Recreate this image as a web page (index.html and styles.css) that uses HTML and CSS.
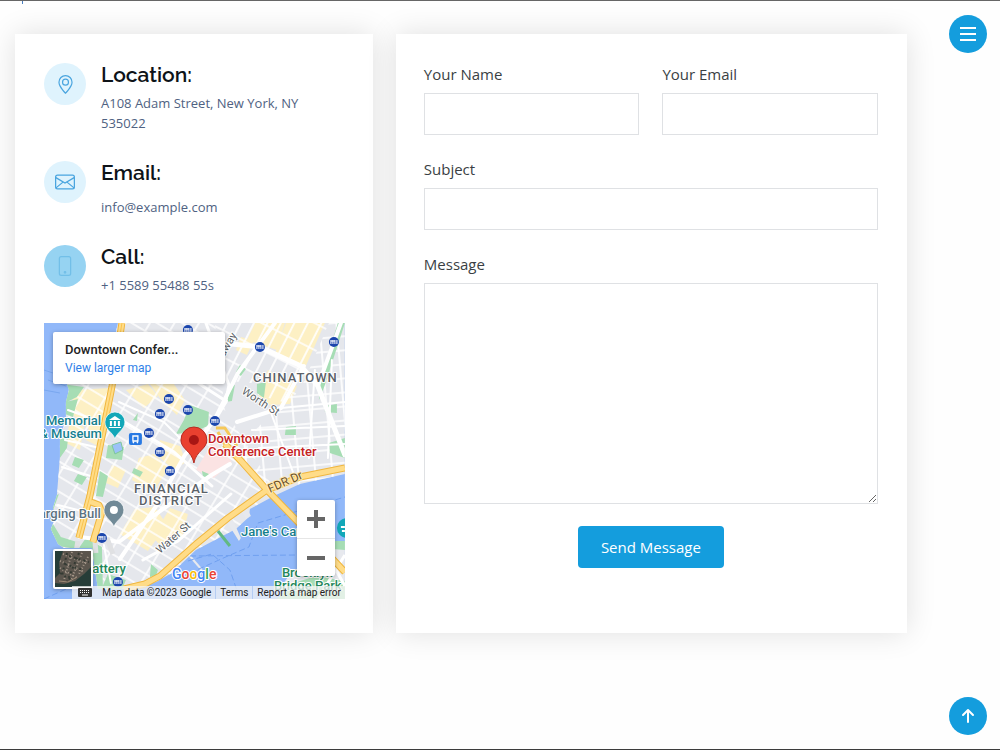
FILE: index.html
```
<!DOCTYPE html>
<html lang="en">
<head>
<meta charset="utf-8">
<meta name="viewport" content="width=device-width, initial-scale=1">
<title>Contact</title>
<link rel="stylesheet" href="styles.css">
</head>
<body>
<main class="page">
  <section class="contact">
    <div class="card info">
      <div class="info-item">
        <span class="info-icon"><svg viewBox="0 0 16 16" width="19" height="19" fill="currentColor"><path d="M12.166 8.94c-.524 1.062-1.234 2.12-1.96 3.07A31.493 31.493 0 0 1 8 14.58a31.481 31.481 0 0 1-2.206-2.57c-.726-.95-1.436-2.008-1.96-3.07C3.304 7.867 3 6.862 3 6a5 5 0 0 1 10 0c0 .862-.305 1.867-.834 2.94zM8 16s6-5.686 6-10A6 6 0 0 0 2 6c0 4.314 6 10 6 10z"/><path d="M8 8a2 2 0 1 1 0-4 2 2 0 0 1 0 4zm0 1a3 3 0 1 0 0-6 3 3 0 0 0 0 6z"/></svg></span>
        <div class="info-body">
          <h2 class="info-title">Location:</h2>
          <p class="info-text">A108 Adam Street, New York, NY 535022</p>
        </div>
      </div>
      <div class="info-item">
        <span class="info-icon"><svg viewBox="0 0 16 16" width="20" height="20" fill="none" stroke="currentColor"><rect x=".5" y="2.500" width="15" height="11" rx="1.500"/><path d="M.7 4.500 8 8.900l7.300-4.400M.8 12.700l5.600-4.600M15.200 12.700 9.600 8.100"/></svg></span>
        <div class="info-body info-body-spaced">
          <h2 class="info-title">Email:</h2>
          <p class="info-text">info@example.com</p>
        </div>
      </div>
      <div class="info-item">
        <span class="info-icon info-icon-active"><svg viewBox="0 0 16 16" width="20" height="20" fill="none" stroke="currentColor"><rect x="3.500" y=".5" width="9" height="15" rx="1.500"/><circle cx="8" cy="13" r=".6" fill="currentColor"/></svg></span>
        <div class="info-body">
          <h2 class="info-title">Call:</h2>
          <p class="info-text">+1 5589 55488 55s</p>
        </div>
      </div>

      <div class="map">
        <svg class="map-art" viewBox="44 323 301 276" preserveAspectRatio="xMidYMid slice" role="img" aria-label="Map of Lower Manhattan">
          <defs>
            <pattern id="grid" width="21" height="13" patternUnits="userSpaceOnUse" patternTransform="rotate(31)"><path d="M0 1H21M1 0V13" stroke="#fff" stroke-width="1.500" fill="none"/></pattern>
            <pattern id="gridEast" width="17" height="14" patternUnits="userSpaceOnUse" patternTransform="rotate(-5)"><path d="M0 1H17M1 0V14" stroke="#fff" stroke-width="1.700" fill="none"/></pattern>
            <pattern id="gridNorth" width="12" height="24" patternUnits="userSpaceOnUse" patternTransform="rotate(27)"><path d="M0 1H12M1 0V24" stroke="#fff" stroke-width="1.700" fill="none"/></pattern>
            <g id="metro"><circle r="5" fill="#1b46ad"/><path d="M-3 2V-2M-1 2V-2M1 2V-2M3 2V-2M-3-1H1" fill="none" stroke="#fff" stroke-width="1"/></g>
            <clipPath id="land"><path d="M118 323H345V474L300 484 274 496 250 509 249 517 236 529 196 550 172 573 156 582 134 589 98 589 92 548 77 548 64 548 58 544 51 529 56 516 53 508 57 495 60 457 60 440 66 418 66 402 69 390 67 384 77 375 112 350Z"/></clipPath>
          </defs>
          <path fill="#91b8f9" d="M44 323H345V599H44Z"/>
          <g clip-path="url(#land)">
            <path fill="#e5e7ec" d="M44 323H345V599H44Z"/>
            <g fill="#fdf0c4">
              <path d="M75 390 110 388 105 415 90 430 70 412ZM92 415 106 418 102 448 86 440ZM70 420 84 427 80 450 66 443Z"/>
              <path d="M150 384 174 384 185 400 177 415 162 401ZM126 390 148 384 158 396 144 408Z"/>
              <path d="M255 323 285 323 277 350 247 340ZM286 323 325 323 305 368 275 354ZM268 370 297 386 290 404 270 405 258 395ZM241 337 254 341 247 355 236 350Z"/>
              <path d="M139 458 154 454 169 468 153 492 132 480ZM160 440 180 446 186 462 174 470 158 456ZM135 509 155 507 167 525 148 551 120 534ZM170 508 188 514 182 538 164 550 153 537ZM112 465 126 470 118 488 106 483Z"/>
            </g>
            <path fill="url(#grid)" d="M44 323H215L225 410 272 485 190 599H44Z"/>
            <path fill="url(#gridNorth)" d="M215 323H329L303 382 290 404 258 395 262 384 218 380Z"/>
            <path fill="url(#gridEast)" d="M329 323H345V480L268 490 236 450 275 410 304 382Z"/>
            <path d="M196 470 214 440 232 462 214 478Z" fill="#fbe3e3"/>
            <g fill="#a6ddb4">
              <path d="M338 323 345 323 325 385 319 400 320 380ZM257 384 266 382 264 398 257 393ZM240 365 246 369 241 376 236 372ZM229 387 235 385 232 401 225 402Z"/>
              <path d="M190 405 209 412 208 426 194 432 176 434 184 420ZM329 443 345 438 345 458 330 453ZM286 427 296 426 296 435 285 435ZM325 406 337 404 337 413 325 412Z"/>
              <path d="M62 384 84 387 77 397 65 403ZM66 402 78 399 73 417 65 414ZM60 440 69 432 67 448 60 458ZM75 457 84 460 79 468 72 465ZM78 474 87 477 82 485 74 481Z"/>
              <path d="M108 445 124 447 122 460 106 458ZM134 468 143 472 140 477 132 473ZM100 471 108 476 103 497 96 496ZM133 420 138 413 137 421ZM91 331 105 334 98 350 85 345Z"/>
              <path d="M50 519 59 494 55 496 51 520 50 531 58 546 77 549 77 542 61 537ZM86 538 102 547 103 589 87 589 79 548ZM108 574 126 580 122 590 102 588ZM151 564 158 570 156 576 150 577ZM202 471 209 474 209 479 203 476Z"/>
            </g>
            <g stroke="#fff" fill="none" stroke-linecap="round">
              <path stroke-width="5" d="M212 342 260 347 301 366 318 386 345 455"/>
              <path stroke-width="4" d="M318 386 341 323M275 323 238 373 214 421 185 455 157 505 120 559M213 423 226 401M304 366 281 408 237 422M80 537 119 542 156 514 210 476 230 464"/>
              <path stroke-width="3" d="M206 323 229 385 226 401 150 352M123 421 174 452 212 486M143 560 178 541 231 494"/>
              <path stroke-width="2" d="M68 410 104 423M65 440 100 448M62 467 97 478M58 505 90 513M119 402 164 422 195 453M252 430 345 426M259 448 345 444M281 408 345 402M315 370 309 458M332 360 328 458M270 410 296 480M104 545 111 583"/>
            </g>
            <g fill="none" stroke-linejoin="round">
              <path d="M216 428 225 428 237 446M218 432 228 450 240 460" stroke="#f6c858" stroke-width="3"/>
              <path d="M107 538 113 554M78 541 76 553M95 540 96 553" stroke="#e0e1e3" stroke-width="5"/>
            </g>
          </g>
          <g fill="#e7e9ee"><path d="M345 541 334 541 330 570 294 569 280 588 300 599H345Z"/><path d="M227 522 232 518 241 538 239 541ZM241 510 247 508 251 516 246 519Z"/></g>
          <path fill="#a6ddb4" d="M334 541H345V550L333 549ZM316 576 345 581V599H277L291 584Z"/>
          <path d="M345 555 318 599M325 550 345 586" stroke="#fff" stroke-width="3"/>
          <path d="M218 531 230 546" stroke="#62b982" stroke-width="3"/>
          <path d="M190 556 202 570" stroke="#e7e9ee" stroke-width="2"/>
          <path d="M190 573 228 556 249 547 258 523 345 497M190 556 298 555M188 561 212 554 230 570 240 599M44 599 82 582" fill="none" stroke="#70a0f0" stroke-width="1" stroke-dasharray="6 3"/>
          <path d="M44 370 62 376M48 380 66 386M44 390 60 393" stroke="#79a7ef" stroke-width="1"/>
          <g fill="none" stroke-linejoin="round">
            <path d="M124 589 145 584 160 576 195 545 228 518 267 490 300 477 345 468M225 444 242 462 267 490 298 522 345 572M122 323 112 387 100 447 90 496 79 538M91 502 99 505 102 512 93 542" stroke="#f0b63d" stroke-width="7"/>
            <path d="M124 589 145 584 160 576 195 545 228 518 267 490 300 477 345 468M225 444 242 462 267 490 298 522 345 572M122 323 112 387 100 447 90 496 79 538M91 502 99 505 102 512 93 542" stroke="#ffdc88" stroke-width="5"/>
            <path d="M122 323 112 387 100 447 90 496 79 538" stroke="#f9c34f" stroke-width="1"/>
          </g>
          <path d="M112 445 121 442 123 450 115 454Z" fill="#9cc2f8" stroke="#7fc79b"/>
          <use href="#metro" x="188" y="330"/><use href="#metro" x="334" y="342"/><use href="#metro" x="260" y="347"/><use href="#metro" x="169" y="399"/><use href="#metro" x="160" y="414"/><use href="#metro" x="188" y="410"/><use href="#metro" x="215" y="421"/><use href="#metro" x="149" y="433"/><use href="#metro" x="160" y="452"/><use href="#metro" x="170" y="471"/><use href="#metro" x="102" y="538"/><use href="#metro" x="118" y="582"/>
          <rect x="129" y="433" width="13" height="12" rx="2" fill="#2879e3"/><path d="M133 436h5v5h-5zM133 443l1-1M138 443l-1-1" fill="none" stroke="#fff" stroke-width="1.300"/>
          <g stroke="#fff" stroke-width=".7">
            <path d="M115 439c-2-7-10-9-10-17a10 10 0 0 1 20 0c0 8-8 10-10 17Z" fill="#12a7b8"/>
            <path d="M114 527c-2-7-10-9-10-17a10 10 0 0 1 20 0c0 8-8 10-10 17Z" fill="#718a97"/>
          </g>
          <path d="M109 420 115 416 121 420ZM110 421h2v5h-2zM114 421h2v5h-2zM118 421h2v5h-2zM109 427h12v1h-12z" fill="#fff"/>
          <circle cx="114" cy="510" r="4" fill="#fff"/>
          <path d="M194 463c-2-12-13-14-13-23a13 13 0 0 1 26 0c0 9-11 11-13 23Z" fill="#e9402f" stroke="#b62d22"/>
          <circle cx="194" cy="440" r="5" fill="#a81614"/>
          <circle cx="347" cy="528" r="10" fill="#12a7b8"/><path d="M341 527h4M342 531h3" stroke="#fff" stroke-width="2"/>
          <g class="map-labels">
            <text class="area" x="253" y="382">CHINATOWN</text>
            <text class="area" x="134" y="493">FINANCIAL</text>
            <text class="area" x="139" y="505">DISTRICT</text>
            <text class="teal" x="46" y="425">Memorial</text>
            <text class="teal" x="102" y="438" text-anchor="end">&amp; Museum</text>
            <text class="red" x="208" y="443">Downtown</text>
            <text class="red" x="208" y="456">Conference Center</text>
            <text class="slate" x="101" y="518" text-anchor="end">Charging Bull</text>
            <text class="green" x="126" y="573" text-anchor="end">Battery</text>
            <text class="teal" x="241" y="536">Jane's Carousel</text>
            <text class="green" x="282" y="577">Brooklyn</text>
            <text class="green" x="274" y="590">Bridge Park</text>
            <text class="road" transform="translate(241 393) rotate(33)">Worth St</text>
            <text class="road" transform="translate(160 554) rotate(-41)">Water St</text>
            <text class="road" transform="translate(213 377) rotate(-60)">Broadway</text>
            <text class="road fdr" transform="translate(270 493) rotate(-24)">FDR Dr</text>
            <text class="google" x="172" y="579"><tspan fill="#4285f4">G</tspan><tspan fill="#ea4335">o</tspan><tspan fill="#fbbc05">o</tspan><tspan fill="#4285f4">g</tspan><tspan fill="#34a853">l</tspan><tspan fill="#ea4335">e</tspan></text>
          </g>
        </svg>
        <div class="place-card">
          <div class="place-name">Downtown Confer...</div>
          <a class="place-link" href="#">View larger map</a>
        </div>
        <button class="satellite" type="button" aria-label="Show satellite imagery"><svg viewBox="0 0 36 36" width="36" height="36"><path fill="#5b554d" d="M0 0H36V36H0Z"/><path fill="#263d38" d="M0 0H8L4 12 5 22 0 27ZM0 32 9 33 20 30 29 23 36 16V36H0Z"/><path d="M8 3 33 13M5 10 29 21M5 17 22 27M17 1 9 29M27 2 16 29M33 6 24 23" stroke="#a6988a" stroke-width="2" stroke-dasharray="1 2"/><path d="M12 2 7 25M24 2 12 31M5 22 17 29M14 5 34 11M10 13 28 19" stroke="#343a33" stroke-width="2" stroke-dasharray="2 3"/><path d="M4 30 13 31 22 26" fill="none" stroke="#9b8975"/></svg></button>
        <div class="zoom">
          <button class="zoom-btn" type="button" aria-label="Zoom in"><svg width="18" height="18" viewBox="0 0 18 18"><path d="M0 9H18M9 0V18" stroke="#666" stroke-width="4"/></svg></button>
          <button class="zoom-btn" type="button" aria-label="Zoom out"><svg width="18" height="18" viewBox="0 0 18 18"><path d="M0 9H18" stroke="#666" stroke-width="4"/></svg></button>
        </div>
        <div class="credits">
          <svg class="keyboard" width="14" height="9" viewBox="0 0 14 9"><rect width="14" height="9" rx="1" fill="#333"/><path d="M2 2.500H12M2 4.500H12" stroke="#fff" stroke-dasharray="1 1"/><path d="M4 7H10" stroke="#fff"/></svg>
          <span class="credit">Map data ©2023 Google</span>
          <a class="credit" href="#">Terms</a>
          <a class="credit" href="#">Report a map error</a>
        </div>
      </div>
    </div>

    <form class="card form">
      <div class="form-row">
        <div class="field"><label for="name">Your Name</label><input class="control" id="name" type="text"></div>
        <div class="field"><label for="email">Your Email</label><input class="control" id="email" type="email"></div>
      </div>
      <div class="field"><label for="subject">Subject</label><input class="control" id="subject" type="text"></div>
      <div class="field"><label for="message">Message</label><textarea class="control message" id="message"></textarea></div>
      <button class="send" type="submit">Send Message</button>
    </form>
  </section>
</main>
<button class="round menu" type="button" aria-label="Open menu"><svg width="18" height="16" viewBox="0 0 18 16"><path d="M1 2H17M1 8H17M1 14H17" stroke="#fff" stroke-width="2"/></svg></button>
<a class="round to-top" href="#" aria-label="Back to top"><svg width="16" height="16" viewBox="0 0 16 16" fill="none" stroke="#fff" stroke-width="2" stroke-linecap="round" stroke-linejoin="round"><path d="M8 14V2M3 7 8 2 13 7"/></svg></a>
</body>
</html>
```
FILE: styles.css
```
* { box-sizing: border-box; }

body {
  margin: 0;
  background: #fefefe;
  color: #3a3f44;
  font: 15px/24px "Open Sans", sans-serif;
}

.page {
  position: relative;
  min-height: 100vh;
  border-top: 1px solid #666;
  border-bottom: 1px solid #3c3c3c;
  padding: 33px 93px 33px 15px;
}

.page::before {
  content: "";
  position: absolute;
  left: 22px;
  top: 0;
  width: 1px;
  height: 3px;
  background: #4a7fc0;
}

.contact {
  display: grid;
  grid-template-columns: 7fr 10fr;
  gap: 23px;
}

.card {
  min-width: 0;
  padding: 28px 29px 34px 28px;
  background: #fff;
  box-shadow: 0 0 28px rgba(0, 0, 0, 0.12);
}

.info {
  display: flex;
  flex-direction: column;
  gap: 28px;
  padding: 29px 28px 34px 29px;
}

.info-item {
  display: flex;
  gap: 15px;
}

.info-icon {
  display: flex;
  align-items: center;
  justify-content: center;
  flex: none;
  width: 42px;
  height: 42px;
  border-radius: 50%;
  background: #dff3fd;
  color: #4aa5df;
}

.info-icon-active {
  background: #96d3f2;
  color: #72bfe8;
}

.info-body {
  display: flex;
  flex-direction: column;
  gap: 6px;
}

.info-body-spaced { gap: 12px; }

.info-title {
  margin: 0;
  color: #0e1318;
  font: 600 21px/24px Raleway, Lato, sans-serif;
}

.info-text {
  margin: 0;
  color: #4f6282;
  font-size: 13px;
  line-height: 20px;
}

.map {
  position: relative;
  height: 276px;
  overflow: hidden;
  font-family: Roboto, sans-serif;
}

.map-art {
  display: block;
  width: 100%;
  height: 100%;
}

.map-labels text {
  font-family: Roboto, sans-serif;
  font-size: 13px;
  font-weight: 500;
  paint-order: stroke;
  stroke: #fff;
  stroke-width: 2px;
  stroke-linejoin: round;
}

.map-labels .area { font-size: 13px; fill: #5b6168; letter-spacing: 1px; }
.map-labels .teal { fill: #15808e; }
.map-labels .red { fill: #c5221f; }
.map-labels .slate { fill: #5b727f; }
.map-labels .green { fill: #23875a; }
.map-labels .road { font-size: 11px; font-weight: 400; fill: #5a5f66; }
.map-labels .fdr { font-size: 12px; fill: #6c5328; stroke: #ffe9b5; }
.map-labels .google { font-size: 14px; }

.place-card {
  position: absolute;
  left: 9px;
  top: 9px;
  width: 172px;
  padding: 9px 12px 7px;
  border-radius: 2px;
  background: #fff;
  box-shadow: 0 1px 4px rgba(0, 0, 0, 0.3);
}

.place-name {
  color: #222;
  font-size: 13px;
  font-weight: 500;
  line-height: 18px;
}

.place-link {
  display: block;
  color: #2f7fe8;
  font-size: 12px;
  line-height: 18px;
  text-decoration: none;
}

.satellite {
  position: absolute;
  left: 9px;
  bottom: 10px;
  display: flex;
  padding: 0;
  border: 2px solid #fff;
  border-radius: 2px;
  background: #fff;
  box-shadow: 0 1px 4px rgba(0, 0, 0, 0.3);
}

.zoom {
  position: absolute;
  right: 10px;
  bottom: 23px;
  display: flex;
  flex-direction: column;
  width: 38px;
  border-radius: 2px;
  background: #fff;
  box-shadow: 0 1px 4px rgba(0, 0, 0, 0.3);
}

.zoom-btn {
  display: flex;
  align-items: center;
  justify-content: center;
  height: 38px;
  padding: 0;
  border: 0;
  background: none;
}

.zoom-btn + .zoom-btn { border-top: 1px solid #e6e6e6; }

.credits {
  position: absolute;
  right: 0;
  bottom: 0;
  display: flex;
  align-items: center;
  height: 13px;
  background: rgba(245, 245, 245, 0.75);
  font-size: 10px;
  line-height: 13px;
  white-space: nowrap;
}

.keyboard { margin: 0 6px; }

.credit {
  padding: 0 4px;
  color: #222;
  text-decoration: none;
}

.credit + .credit { border-left: 1px solid #b5cdf3; }

.form {
  display: flex;
  flex-direction: column;
  gap: 22px;
}

.form-row {
  display: grid;
  grid-template-columns: 1fr 1fr;
  gap: 23px;
}

.field {
  display: flex;
  flex-direction: column;
  gap: 7px;
  min-width: 0;
}

.control {
  display: block;
  width: 100%;
  height: 42px;
  padding: 6px 12px;
  border: 1px solid #dfe1e4;
  border-radius: 0;
  background: #fff;
  color: inherit;
  font: inherit;
}

.message {
  height: 221px;
  resize: vertical;
}

.send {
  align-self: center;
  padding: 9px 23px;
  border: 0;
  border-radius: 4px;
  background: #149ddd;
  color: #fff;
  font: inherit;
}

.round {
  position: fixed;
  right: 13px;
  display: flex;
  align-items: center;
  justify-content: center;
  width: 38px;
  height: 38px;
  padding: 0;
  border: 0;
  border-radius: 50%;
  background: #149ddd;
}

.menu { top: 15px; }
.to-top { bottom: 15px; }
```
